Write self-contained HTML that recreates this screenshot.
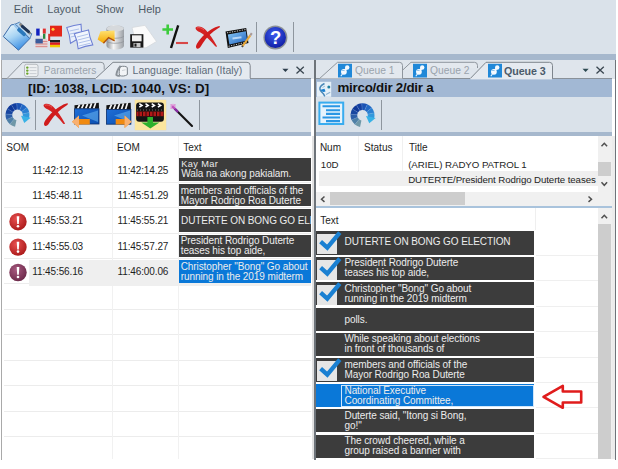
<!DOCTYPE html>
<html><head><meta charset="utf-8">
<style>
*{box-sizing:border-box;margin:0;padding:0}
html,body{width:618px;height:469px;overflow:hidden;background:#fff}
body{position:relative;font-family:"Liberation Sans",sans-serif}
.a{position:absolute}
.t{position:absolute;white-space:nowrap;line-height:1}
svg{position:absolute;overflow:visible}
.mn{font-size:11px;color:#4e5a66;top:3.6px}
.hd{font-size:10px;color:#1e1e1e}
.tm{font-size:10px;color:#1e1e1e;letter-spacing:-0.12px}
.tr{font-size:9.7px;color:#1e1e1e;letter-spacing:-0.04px}
.cell{overflow:hidden}
.ct{font-size:10px;color:#ececec;letter-spacing:-0.08px}
.tab{font-size:10.2px;color:#9aa3ac}
</style></head><body>
<!-- top area -->
<div class="a" style="left:1px;top:0;width:615px;height:54px;background:#dae2ea"></div>
<div class="a" style="left:1px;top:54px;width:615px;height:5.6px;background:#a6b8cd"></div>
<!-- menu -->
<div class="t mn" style="left:13.8px">Edit</div>
<div class="t mn" style="left:47.3px">Layout</div>
<div class="t mn" style="left:96px">Show</div>
<div class="t mn" style="left:138.3px">Help</div>
<!-- toolbar separators -->
<div class="a" style="left:256px;top:22px;width:1.2px;height:30px;background:#8e969e"></div>
<div class="a" style="left:293px;top:22px;width:1.2px;height:30px;background:#8e969e"></div>

<!-- LEFT PANEL -->
<div class="a" style="left:1px;top:59.6px;width:313px;height:19px;background:#dfe5ec"></div>
<div class="a" style="left:1px;top:78.3px;width:310px;height:1px;background:#8a9199"></div>
<div class="a" style="left:1px;top:79.3px;width:310px;height:18px;background:#a2b8d4"></div>
<div class="t" style="left:28px;top:81.6px;font-size:13.35px;font-weight:bold;color:#111;letter-spacing:0.06px">[ID: 1038, LCID: 1040, VS: D]</div>
<div class="a" style="left:1px;top:97.3px;width:310px;height:34.7px;background:#dae2ea"></div>
<div class="a" style="left:1px;top:132px;width:310px;height:4px;background:#a6b8cd"></div>
<div class="a" style="left:1px;top:136px;width:311px;height:323.3px;background:#fff"></div>
<div class="a" style="left:312px;top:136px;width:2px;height:323.3px;background:#e2e2e2"></div>
<div class="a" style="left:1px;top:59.6px;width:1px;height:400px;background:#a9a9a9"></div>
<div class="a" style="left:35px;top:99.5px;width:1.2px;height:30.5px;background:#8e969e"></div>
<div class="a" style="left:198.5px;top:99.5px;width:1.2px;height:30.5px;background:#8e969e"></div>
<div class="a" style="left:134.6px;top:100px;width:31px;height:29.5px;background:#fce69e;box-shadow:0 0 1px #f0d080"></div>

<!-- RIGHT PANEL -->
<div class="a" style="left:314px;top:59.6px;width:1.6px;height:400px;background:#6e747a"></div>
<div class="a" style="left:315.6px;top:59.6px;width:300px;height:19px;background:#dfe5ec"></div>
<div class="a" style="left:316px;top:78.3px;width:296px;height:1px;background:#8a9199"></div>
<div class="a" style="left:316px;top:79.3px;width:296px;height:18px;background:#a2b8d4"></div>
<div class="t" style="left:337.5px;top:81px;font-size:13.35px;font-weight:bold;color:#111;letter-spacing:-0.25px">mirco/dir 2/dir a</div>
<div class="a" style="left:316px;top:97.3px;width:296px;height:34.7px;background:#dae2ea"></div>
<div class="a" style="left:316px;top:132px;width:296px;height:4px;background:#a6b8cd"></div>
<div class="a" style="left:316px;top:136px;width:296px;height:323.3px;background:#fff"></div>
<div class="a" style="left:611px;top:136px;width:4px;height:323.3px;background:#ececec"></div>
<div class="a" style="left:615px;top:59.6px;width:1.2px;height:400px;background:#6e747a"></div>
<div class="a" style="left:380.5px;top:99.5px;width:1.2px;height:30.5px;background:#8e969e"></div>

<div class="a" style="left:4px;top:181.73px;width:307px;height:1px;background:#ececec"></div>
<div class="a" style="left:4px;top:207.16px;width:307px;height:1px;background:#ececec"></div>
<div class="a" style="left:4px;top:232.59px;width:307px;height:1px;background:#ececec"></div>
<div class="a" style="left:4px;top:258.02px;width:307px;height:1px;background:#ececec"></div>
<div class="a" style="left:4px;top:283.45px;width:307px;height:1px;background:#ececec"></div>
<div class="a" style="left:4px;top:308.88px;width:307px;height:1px;background:#ececec"></div>
<div class="a" style="left:4px;top:334.31px;width:307px;height:1px;background:#ececec"></div>
<div class="a" style="left:4px;top:359.74px;width:307px;height:1px;background:#ececec"></div>
<div class="a" style="left:4px;top:385.17px;width:307px;height:1px;background:#ececec"></div>
<div class="a" style="left:4px;top:410.60px;width:307px;height:1px;background:#ececec"></div>
<div class="a" style="left:4px;top:436.03px;width:307px;height:1px;background:#ececec"></div>
<div class="a" style="left:112px;top:136px;width:1px;height:323px;background:#f1f1f1"></div>
<div class="a" style="left:177.5px;top:136px;width:1px;height:323px;background:#f1f1f1"></div>
<div class="t hd" style="left:6.3px;top:142.8px">SOM</div>
<div class="t hd" style="left:117px;top:142.8px">EOM</div>
<div class="t hd" style="left:183.3px;top:142.8px">Text</div>
<div class="t tm" style="left:32.3px;top:165.50px">11:42:12.13</div>
<div class="t tm" style="left:117.5px;top:165.50px">11:42:14.25</div>
<div class="a cell" style="left:179px;top:158.30px;width:132.3px;height:22.7px;background:#3c3c3c">
<div class="t ct" style="left:2.2px;top:1.5px;font-size:9.2px;letter-spacing:0.4px">Kay Mar</div>
<div class="t ct" style="left:2.2px;top:11.2px">Wala na akong pakialam.</div>
</div>
<div class="t tm" style="left:32.3px;top:190.93px">11:45:48.11</div>
<div class="t tm" style="left:117.5px;top:190.93px">11:45:51.29</div>
<div class="a cell" style="left:179px;top:183.73px;width:132.3px;height:22.7px;background:#3c3c3c">
<div class="t ct" style="left:1.7px;top:1.8px">members and officials of the</div>
<div class="t ct" style="left:1.7px;top:11.8px">Mayor Rodrigo Roa Duterte</div>
</div>
<div class="t tm" style="left:32.3px;top:216.36px">11:45:53.21</div>
<div class="t tm" style="left:117.5px;top:216.36px">11:45:55.21</div>
<div class="a cell" style="left:179px;top:209.16px;width:132.3px;height:22.7px;background:#3c3c3c">
<div class="t ct" style="left:2px;top:6.6px">DUTERTE ON BONG GO ELECTION</div>
</div>
<div class="t tm" style="left:32.3px;top:241.79px">11:45:55.03</div>
<div class="t tm" style="left:117.5px;top:241.79px">11:45:57.27</div>
<div class="a cell" style="left:179px;top:234.59px;width:132.3px;height:22.7px;background:#3c3c3c">
<div class="t ct" style="left:1.7px;top:1.8px">President Rodrigo Duterte</div>
<div class="t ct" style="left:1.7px;top:11.8px">teases his top aide,</div>
</div>
<div class="a" style="left:29px;top:260.32px;width:282px;height:25.5px;background:#efefef"></div>
<div class="t tm" style="left:32.3px;top:267.22px">11:45:56.16</div>
<div class="t tm" style="left:117.5px;top:267.22px">11:46:00.06</div>
<div class="a cell" style="left:179px;top:260.02px;width:132.3px;height:22.7px;background:#0a78d8">
<div class="t ct" style="left:1.7px;top:1.8px">Christopher &quot;Bong&quot; Go about</div>
<div class="t ct" style="left:1.7px;top:11.8px">running in the 2019 midterm</div>
</div>
<div class="a" style="left:358px;top:136px;width:1px;height:50px;background:#f0f0f0"></div>
<div class="a" style="left:402px;top:136px;width:1px;height:50px;background:#f0f0f0"></div>
<div class="t hd" style="left:319.9px;top:142.8px">Num</div>
<div class="t hd" style="left:364.1px;top:142.8px">Status</div>
<div class="t hd" style="left:409.1px;top:142.8px">Title</div>
<div class="a" style="left:319px;top:170.8px;width:279px;height:15.5px;background:#efefef"></div>
<div class="t tr" style="left:320.8px;top:160px">10D</div>
<div class="t tr" style="left:408.2px;top:160px">(ARIEL) RADYO PATROL 1</div>
<div class="t tr" style="left:408.2px;top:174.6px;letter-spacing:-0.1px">DUTERTE/President Rodrigo Duterte teases</div>
<div class="a" style="left:316px;top:192.3px;width:282px;height:13.4px;background:#f0f0f0"></div>
<div class="a" style="left:330px;top:192.3px;width:135px;height:12.3px;background:#cdcdcd"></div>
<div class="a" style="left:598px;top:136px;width:14px;height:70px;background:#f0f0f0"></div>
<div class="a" style="left:598.3px;top:162px;width:12.5px;height:13.5px;background:#cdcdcd"></div>
<div class="a" style="left:316px;top:205.7px;width:296px;height:2.6px;background:#a9c3dc"></div>
<div class="a" style="left:534.7px;top:208.3px;width:1px;height:22px;background:#efefef"></div>
<div class="t hd" style="left:320.3px;top:215.8px">Text</div>
<div class="a" style="left:598px;top:208.3px;width:14px;height:251px;background:#f0f0f0"></div>
<div class="a" style="left:598.3px;top:224.2px;width:12.5px;height:235.1px;background:#cdcdcd"></div>
<div class="a" style="left:536px;top:254.90px;width:62px;height:1px;background:#efefef"></div>
<div class="a" style="left:536px;top:280.30px;width:62px;height:1px;background:#efefef"></div>
<div class="a" style="left:536px;top:305.70px;width:62px;height:1px;background:#efefef"></div>
<div class="a" style="left:536px;top:331.10px;width:62px;height:1px;background:#efefef"></div>
<div class="a" style="left:536px;top:356.50px;width:62px;height:1px;background:#efefef"></div>
<div class="a" style="left:536px;top:381.90px;width:62px;height:1px;background:#efefef"></div>
<div class="a" style="left:536px;top:407.30px;width:62px;height:1px;background:#efefef"></div>
<div class="a" style="left:536px;top:432.70px;width:62px;height:1px;background:#efefef"></div>
<div class="a" style="left:536px;top:458.10px;width:62px;height:1px;background:#efefef"></div>
<div class="a cell" style="left:316px;top:231.30px;width:218.3px;height:23.3px;background:#3c3c3c">
<div class="a" style="left:1px;top:3px;width:20px;height:20px;background:#e6e6e6"></div>
<div class="t ct" style="left:28.5px;top:5.9px">DUTERTE ON BONG GO ELECTION</div>
</div>
<svg class="a" style="left:316px;top:231.30px" width="30" height="24"><path d="M4.6 10.6 L11.3 16.6 L23.8 1.6" fill="none" stroke="#1a80d2" stroke-width="4.3" stroke-linejoin="miter" stroke-linecap="butt"/></svg>
<div class="a cell" style="left:316px;top:256.70px;width:218.3px;height:23.3px;background:#3c3c3c">
<div class="a" style="left:1px;top:3px;width:20px;height:20px;background:#e6e6e6"></div>
<div class="t ct" style="left:28.5px;top:1.5px">President Rodrigo Duterte</div>
<div class="t ct" style="left:28.5px;top:11.5px">teases his top aide,</div>
</div>
<svg class="a" style="left:316px;top:256.70px" width="30" height="24"><path d="M4.6 10.6 L11.3 16.6 L23.8 1.6" fill="none" stroke="#1a80d2" stroke-width="4.3" stroke-linejoin="miter" stroke-linecap="butt"/></svg>
<div class="a cell" style="left:316px;top:282.10px;width:218.3px;height:23.3px;background:#3c3c3c">
<div class="a" style="left:1px;top:3px;width:20px;height:20px;background:#e6e6e6"></div>
<div class="t ct" style="left:28.5px;top:1.5px">Christopher &quot;Bong&quot; Go about</div>
<div class="t ct" style="left:28.5px;top:11.5px">running in the 2019 midterm</div>
</div>
<svg class="a" style="left:316px;top:282.10px" width="30" height="24"><path d="M4.6 10.6 L11.3 16.6 L23.8 1.6" fill="none" stroke="#1a80d2" stroke-width="4.3" stroke-linejoin="miter" stroke-linecap="butt"/></svg>
<div class="a cell" style="left:316px;top:307.50px;width:218.3px;height:23.3px;background:#3c3c3c">
<div class="t ct" style="left:28.5px;top:7.9px">polls.</div>
</div>
<div class="a cell" style="left:316px;top:332.90px;width:218.3px;height:23.3px;background:#3c3c3c">
<div class="t ct" style="left:28.5px;top:1.5px">While speaking about elections</div>
<div class="t ct" style="left:28.5px;top:11.5px">in front of thousands of</div>
</div>
<div class="a cell" style="left:316px;top:358.30px;width:218.3px;height:23.3px;background:#3c3c3c">
<div class="a" style="left:1px;top:3px;width:20px;height:20px;background:#e6e6e6"></div>
<div class="t ct" style="left:28.5px;top:1.5px">members and officials of the</div>
<div class="t ct" style="left:28.5px;top:11.5px">Mayor Rodrigo Roa Duterte</div>
</div>
<svg class="a" style="left:316px;top:358.30px" width="30" height="24"><path d="M4.6 10.6 L11.3 16.6 L23.8 1.6" fill="none" stroke="#1a80d2" stroke-width="4.3" stroke-linejoin="miter" stroke-linecap="butt"/></svg>
<div class="a cell" style="left:316px;top:383.70px;width:218.3px;height:23.7px;background:#0a78d8">
<div class="a" style="left:24.6px;top:1.2px;width:193.7px;height:21.7px;border:1px solid #cfe6fb"></div>
<div class="t ct" style="left:28.5px;top:2.7px">National Executive</div>
<div class="t ct" style="left:28.5px;top:12.7px">Coordinating Committee,</div>
</div>
<div class="a cell" style="left:316px;top:409.10px;width:218.3px;height:23.3px;background:#3c3c3c">
<div class="t ct" style="left:28.5px;top:1.5px">Duterte said, &quot;Itong si Bong,</div>
<div class="t ct" style="left:28.5px;top:11.5px">go!&quot;</div>
</div>
<div class="a cell" style="left:316px;top:434.50px;width:218.3px;height:23.3px;background:#3c3c3c">
<div class="t ct" style="left:28.5px;top:1.5px">The crowd cheered, while a</div>
<div class="t ct" style="left:28.5px;top:11.5px">group raised a banner with</div>
</div>
<!-- TABS -->
<svg class="a" style="left:0;top:0" width="618" height="469">
 <!-- left panel tabs -->
 <path d="M7 78.6 L22.8 62.3 L101 62.3 Q104.2 62.3 104.2 65.5 L104.2 69.5" fill="#e3e8ee" stroke="#8f969e" stroke-width="1"/>
 <path d="M95.3 78.8 L113 62.3 L247 62.3 Q250.2 62.3 250.2 65.5 L250.2 78.8" fill="#e5eaf0" stroke="#7e858d" stroke-width="1"/>
 <rect x="95.8" y="78" width="154" height="1.4" fill="#e5eaf0"/>
 <!-- right panel tabs -->
 <path d="M319.5 78.6 L337.5 62.3 L399.5 62.3 Q402.5 62.3 402.5 65.5 L402.5 78.6" fill="#e3e8ee" stroke="#8f969e" stroke-width="1"/>
 <path d="M403 69.8 L411 62.3 L474.5 62.3 Q477.5 62.3 477.5 65.5 L477.5 68" fill="#e3e8ee" stroke="#8f969e" stroke-width="1"/>
 <path d="M470 78.8 L486 62.3 L549.5 62.3 Q552.5 62.3 552.5 65.5 L552.5 78.8" fill="#e5eaf0" stroke="#7e858d" stroke-width="1"/>
 <rect x="470.5" y="78" width="81.5" height="1.4" fill="#e5eaf0"/>
 <!-- dropdown + close -->
 <path d="M282.3 68.8 L288.5 68.8 L285.4 72 Z" fill="#2d3e4c"/>
 <path d="M296.5 66.7 L303.8 73.5 M303.8 66.7 L296.5 73.5" stroke="#3a4650" stroke-width="1.3"/>
 <path d="M582.5 68.8 L588.7 68.8 L585.6 72 Z" fill="#2d4a52"/>
 <path d="M596.5 66.7 L603.8 73.5 M603.8 66.7 L596.5 73.5" stroke="#3a4650" stroke-width="1.3"/>
</svg>
<div class="t tab" style="left:43.7px;top:66.2px">Parameters</div>
<div class="t tab" style="left:132.6px;top:65.4px;color:#5e6c7a;font-size:10.5px">Language: Italian (Italy)</div>
<div class="t tab" style="left:355px;top:65.8px;font-size:10.3px">Queue 1</div>
<div class="t tab" style="left:430px;top:65.8px;font-size:10.3px">Queue 2</div>
<div class="t tab" style="left:504px;top:65.5px;font-size:10.7px;font-weight:bold;color:#4a5a6a;letter-spacing:-0.1px">Queue 3</div>

<svg class="a" style="left:0;top:0" width="618" height="469">
 <!-- parameters icon -->
 <rect x="24.5" y="64.3" width="13.5" height="12.3" rx="2" fill="#eef0f2" stroke="#a8adb2" stroke-width="0.8"/>
 <g fill="#6aa52a"><circle cx="27.3" cy="67.6" r="1.2"/><circle cx="27.3" cy="70.6" r="1.2"/><circle cx="27.3" cy="73.6" r="1.2"/></g>
 <g stroke="#c9ced3" stroke-width="1"><path d="M29.5 67.6H36.5M29.5 70.6H36.5M29.5 73.6H36.5"/></g>
 <!-- language icon -->
 <path d="M120.2 66.6 C123.5 66 126 66.2 127.3 67.5 L127.4 74.6 C125 76.2 122 76.4 119.6 75.6 C118.8 73 119.2 69.5 120.2 66.6 Z" fill="#f2f4f6" stroke="#7a8289" stroke-width="1"/>
 <path d="M120.6 65.8 C118.2 68.5 116.6 71.5 116.3 74.8 C117.3 75.8 118.6 76 119.8 75.6" fill="none" stroke="#8a9198" stroke-width="1.8"/>
 <path d="M122 70.5 L125.5 69.8" stroke="#c0c6cc" stroke-width="0.8"/>
 <!-- queue icons -->
 <g>
  <rect x="338" y="63.8" width="14" height="13.7" fill="#2088d8"/>
  <circle cx="347.2" cy="67.5" r="2.2" fill="#f4faff"/>
  <path d="M344.8 70.4 L346.6 68.4" stroke="#f4faff" stroke-width="2"/>
  <circle cx="343.9" cy="71.8" r="2.9" fill="#f4faff"/>
  <path d="M341.6 70.3 L344.6 70.6" stroke="#60a8e0" stroke-width="0.7"/>
  <path d="M342.4 74 L340.8 76.3" stroke="#e8f4ff" stroke-width="1.1"/>
 </g>
 <g transform="translate(75 0)">
  <rect x="338" y="63.8" width="14" height="13.7" fill="#2088d8"/>
  <circle cx="347.2" cy="67.5" r="2.2" fill="#f4faff"/>
  <path d="M344.8 70.4 L346.6 68.4" stroke="#f4faff" stroke-width="2"/>
  <circle cx="343.9" cy="71.8" r="2.9" fill="#f4faff"/>
  <path d="M341.6 70.3 L344.6 70.6" stroke="#60a8e0" stroke-width="0.7"/>
  <path d="M342.4 74 L340.8 76.3" stroke="#e8f4ff" stroke-width="1.1"/>
 </g>
 <g transform="translate(150 0)">
  <rect x="338" y="63.8" width="14" height="13.7" fill="#2088d8"/>
  <circle cx="347.2" cy="67.5" r="2.2" fill="#f4faff"/>
  <path d="M344.8 70.4 L346.6 68.4" stroke="#f4faff" stroke-width="2"/>
  <circle cx="343.9" cy="71.8" r="2.9" fill="#f4faff"/>
  <path d="M341.6 70.3 L344.6 70.6" stroke="#60a8e0" stroke-width="0.7"/>
  <path d="M342.4 74 L340.8 76.3" stroke="#e8f4ff" stroke-width="1.1"/>
 </g>
 <!-- right title icon -->
 <rect x="317" y="81.8" width="14.2" height="15" fill="#e6f0f8"/>
 <path d="M324.5 83.5 C321.5 85 319.5 87.5 320 89.5 C320.5 91.5 322.5 92.5 323.5 94 L324.8 96.3" fill="none" stroke="#4a88b8" stroke-width="1.5"/>
 <path d="M320.5 89.8 C321.5 91.8 323.5 92.5 325.5 91.5 L324.5 88.8 Z" fill="#1a80d0"/>
 <path d="M322.5 87.5 L325 86" stroke="#9ac0da" stroke-width="1"/>
 <circle cx="328.8" cy="87" r="1.5" fill="#1f7fa0"/>
 <path d="M326 94.5 L330.2 92.3" stroke="#8ab0d0" stroke-width="1.1"/>
</svg>

<!-- TOOLBAR ICONS -->
<svg class="a" style="left:0;top:0" width="618" height="469">
 <defs>
  <linearGradient id="gfold" x1="0.1" y1="0.1" x2="0.6" y2="1"><stop offset="0" stop-color="#e6f4fc"/><stop offset="0.45" stop-color="#a8d4f4"/><stop offset="1" stop-color="#3a8ee4"/></linearGradient>
  <linearGradient id="gdb" x1="0" y1="0" x2="1" y2="0"><stop offset="0" stop-color="#8d9298"/><stop offset="0.4" stop-color="#f4f4f4"/><stop offset="1" stop-color="#9a9fa5"/></linearGradient>
  <linearGradient id="garr" x1="0" y1="0" x2="0" y2="1"><stop offset="0" stop-color="#ffe070"/><stop offset="1" stop-color="#f5a800"/></linearGradient>
  <linearGradient id="gfilm" x1="0" y1="0" x2="1" y2="1"><stop offset="0" stop-color="#8ccaf6"/><stop offset="1" stop-color="#1a5fc0"/></linearGradient>
  <radialGradient id="ghelp" cx="0.45" cy="0.35" r="0.7"><stop offset="0" stop-color="#3c5cf0"/><stop offset="1" stop-color="#0d1aa0"/></radialGradient>
  <linearGradient id="gclap" x1="0" y1="0" x2="1" y2="1"><stop offset="0" stop-color="#1f6fd8"/><stop offset="1" stop-color="#0b4fb0"/></linearGradient>
  <linearGradient id="gref" x1="0" y1="0" x2="1" y2="1"><stop offset="0" stop-color="#0d3a9a"/><stop offset="0.6" stop-color="#1f6ccc"/><stop offset="1" stop-color="#3ab6e8"/></linearGradient>
  <radialGradient id="gerr" cx="0.4" cy="0.35" r="0.7"><stop offset="0" stop-color="#e85050"/><stop offset="1" stop-color="#a81818"/></radialGradient>
  <radialGradient id="gerr2" cx="0.4" cy="0.35" r="0.7"><stop offset="0" stop-color="#a85a80"/><stop offset="1" stop-color="#6a2848"/></radialGradient>
 </defs>
 <!-- 1 folder -->
 <path d="M12 25.5 L19.5 22.2 L31.8 33.8 L29.8 38.6 Z" fill="#b8d8f2" stroke="#4a78b0" stroke-width="0.9"/>
 <path d="M3.3 36.5 L11 25 L15 24.2 L18.5 27 L29.8 38.6 L18.5 50.2 Z" fill="url(#gfold)" stroke="#3a6aa8" stroke-width="1"/>
 <path d="M20.5 24.5 L29.8 33.2" stroke="#8a8680" stroke-width="2.6" stroke-linecap="round"/>
 <path d="M22.2 26.4 L28.6 31.6" stroke="#1e3456" stroke-width="2.8" stroke-linecap="round"/>
 <path d="M18.8 29.6 L24.2 34.4" stroke="#2a78bc" stroke-width="3.6" stroke-linecap="round"/>
 <path d="M14.5 25 L17.2 28.2" stroke="#9cc8ee" stroke-width="2" stroke-linecap="round"/>
 <!-- 2 flags -->
 <rect x="36.2" y="28.6" width="3.6" height="7" fill="#1020c0"/><rect x="39.8" y="28.6" width="3" height="7" fill="#f4f4f4"/><rect x="42.8" y="28.6" width="3" height="5" fill="#e03030"/>
 <rect x="43" y="33.8" width="2.6" height="7.2" fill="#2a8a40"/><rect x="45.6" y="33.8" width="2.6" height="7.2" fill="#f0f0f0"/><rect x="48.2" y="33.8" width="2" height="7.2" fill="#d83030"/>
 <rect x="35.5" y="38.8" width="11.9" height="8.8" fill="#e8d0d0"/><path d="M35.5 41.5H47.4M35.5 44H47.4M35.5 46.6H47.4" stroke="#d88a8a" stroke-width="1"/><rect x="35.5" y="38.8" width="7.3" height="4.6" fill="#3a5c9c"/>
 <rect x="50" y="25.7" width="12" height="10.8" fill="#e42618"/><circle cx="53" cy="29.3" r="1.5" fill="#ffd23a"/>
 <rect x="50" y="40" width="10" height="2.5" fill="#1c1c1c"/><rect x="50" y="42.5" width="10" height="2.4" fill="#dd1c1c"/><rect x="50" y="44.9" width="10" height="2.4" fill="#f2c800"/>
 <!-- 3 documents -->
 <path d="M66.8 27.6 Q74 25.2 81 24.2 Q81.2 30.5 82.4 37 Q76 39.5 70.5 43.2 Q70 35 66.8 27.6 Z" fill="#eaf0fb" stroke="#6e80d4" stroke-width="1.1"/>
 <path d="M69.5 31 L79 29 M70 34 L79.5 32 M70.7 37 L80 35" stroke="#a8bce8" stroke-width="0.9"/>
 <path d="M74.3 33.8 Q81.5 31.5 88.5 30 Q89.5 37.5 92.8 44.9 Q85 46 78.2 48.8 Q77.5 40.5 74.3 33.8 Z" fill="#f2f6fd" stroke="#6e80d4" stroke-width="1.1"/>
 <path d="M77 37 L88 34.2 M77.8 40 L89 37.2 M78.5 43 L90 40.2 M79 46 L90.5 43.2" stroke="#a8bce8" stroke-width="0.9"/>
 <!-- 4 db + arrow -->
 <path d="M106.5 29 C106.5 24 124 24 124 29 L124 45.5 C124 51 106.5 51 106.5 45.5 Z" fill="url(#gdb)"/>
 <ellipse cx="115.2" cy="28.5" rx="8.7" ry="3" fill="#d6d9dc"/>
 <path d="M106.5 36 C108 39 122 39 124 36 M106.5 41 C108 44 122 44 124 41" stroke="#8c9196" stroke-width="0.7" fill="none"/>
 <path d="M97.6 39.5 L100.5 31.2 L114.6 30.6 L114.6 40.8 L108.6 37.6 L103.4 43.2 Z" fill="url(#garr)"/>
 <path d="M103.4 43.2 L108.6 37.6 L114.6 40.8" stroke="#b0500c" stroke-width="1.4" fill="none"/>
 <!-- 5 floppy + paper -->
 <path d="M132 27.5 L145 25.3 L156.5 41.5 L146 47.8 L137 47.8 Z" fill="#fbfbfb" stroke="#d4d8dc" stroke-width="0.8"/>
 <path d="M130.2 34.2 L143.4 34.2 L143.4 47.6 L130.2 47.6 Z" fill="#1a1a1a"/>
 <rect x="132" y="35.3" width="9.6" height="6" fill="#f0f0f0"/>
 <rect x="133.5" y="43" width="7" height="4" fill="#c8c8c8"/><rect x="134.5" y="43.6" width="2" height="3" fill="#1a1a1a"/>
 <!-- 6 +/- -->
 <path d="M162.4 29.5 H173 M167.7 24.5 V34.5" stroke="#3ccc3c" stroke-width="2.6"/>
 <path d="M171 48 L178.2 25.3" stroke="#111" stroke-width="2.4"/>
 <path d="M176 43 H188" stroke="#d84848" stroke-width="2.1"/>
 <!-- 7 red X -->
 <g>
 <path d="M195.5 27.8 C197.5 25.3 202 26.3 205.2 29.5 C209.3 33.6 213.2 39.3 217 46.3 C216.6 47.2 215.6 46.8 215 46.1 C211 41.3 206.5 36.8 202.5 33.8 C199.3 31.6 195.8 31.2 195.5 27.8 Z" fill="#d42222"/>
 <path d="M219.7 26 C220.2 26.9 219.5 27.6 218.5 28.1 C212 32 206.3 37.6 202.3 44 C200.8 46.5 199.7 48.8 197.6 48.7 C195.4 48.2 195.7 45.6 197.4 43 C201.4 37 207.8 31.2 213.8 28.1 C215.9 27 218 26 219.7 26 Z" fill="#d01c1c"/>
 <path d="M197 28 C199 27 202 28 204 30" stroke="#f07070" stroke-width="1" fill="none" opacity="0.7"/>
 </g>
 <!-- 8 film + pencil -->
 <path d="M225.5 31.5 L246.2 28 L248.5 43 L227.8 48 Z" fill="#101010"/>
 <path d="M227.8 34.5 L245.8 31.3 L247.2 40.5 L229.4 44.5 Z" fill="url(#gfilm)"/>
 <path d="M227 32.8 L246 29.5 M228.6 46.3 L247.8 41.8" stroke="#e8e8e8" stroke-width="0.9" stroke-dasharray="1.2 1.3"/>
 <path d="M232.5 38.6 L241.5 37.2" stroke="#d8ecff" stroke-width="2" opacity="0.75"/>
 <path d="M242.3 46.5 L250.3 35.3" stroke="#e8a838" stroke-width="2.1"/>
 <path d="M250.3 35.3 L251.8 33.2" stroke="#a89a98" stroke-width="2.1"/>
 <path d="M242 47 L242.8 45.8" stroke="#444" stroke-width="1.8"/>
 <!-- 9 help -->
 <circle cx="275.4" cy="37.5" r="12" fill="#8a8f96"/>
 <circle cx="275.4" cy="37.5" r="10.6" fill="url(#ghelp)"/>
 <text x="275.6" y="44.3" text-anchor="middle" font-family="Liberation Sans" font-weight="bold" font-size="18.5" fill="#fff">?</text>

 <!-- LEFT PANEL TOOLBAR -->
 <g>
<path d="M15.07 126.65 A12 12 0 0 1 9.83 124.13 L14.11 118.98 A5.3 5.3 0 0 0 16.43 120.09 Z" fill="#6f98a8"/>
<path d="M9.93 124.21 A12 12 0 0 1 6.45 119.57 L12.62 116.96 A5.3 5.3 0 0 0 14.16 119.01 Z" fill="#4f80a6"/>
<path d="M6.50 119.68 A12 12 0 0 1 5.54 113.96 L12.22 114.48 A5.3 5.3 0 0 0 12.64 117.01 Z" fill="#2c5ea8"/>
<path d="M5.53 114.08 A12 12 0 0 1 7.31 108.56 L13.00 112.10 A5.3 5.3 0 0 0 12.21 114.54 Z" fill="#1846a0"/>
<path d="M7.25 108.67 A12 12 0 0 1 11.37 104.58 L14.79 110.34 A5.3 5.3 0 0 0 12.97 112.15 Z" fill="#0f3898"/>
<path d="M11.27 104.65 A12 12 0 0 1 16.81 102.92 L17.19 109.61 A5.3 5.3 0 0 0 14.75 110.37 Z" fill="#123ea0"/>
<path d="M16.68 102.93 A12 12 0 0 1 22.40 103.95 L19.66 110.06 A5.3 5.3 0 0 0 17.14 109.61 Z" fill="#1a52b4"/>
<path d="M22.28 103.90 A12 12 0 0 1 26.89 107.43 L21.65 111.60 A5.3 5.3 0 0 0 19.61 110.04 Z" fill="#2268c4"/>
<path d="M26.81 107.33 A12 12 0 0 1 29.28 112.59 L22.70 113.88 A5.3 5.3 0 0 0 21.61 111.56 Z" fill="#2a80d2"/>
<path d="M29.25 112.47 A12 12 0 0 1 29.02 118.27 L22.59 116.39 A5.3 5.3 0 0 0 22.69 113.83 Z" fill="#3298dc"/>
<path d="M14.14 119.00 L9.88 124.17" stroke="#a8c8ee" stroke-width="0.5" opacity="0.5"/>
<path d="M12.63 116.99 L6.47 119.63" stroke="#a8c8ee" stroke-width="0.5" opacity="0.5"/>
<path d="M12.21 114.51 L5.53 114.02" stroke="#a8c8ee" stroke-width="0.5" opacity="0.5"/>
<path d="M12.99 112.12 L7.28 108.61" stroke="#a8c8ee" stroke-width="0.5" opacity="0.5"/>
<path d="M14.77 110.36 L11.32 104.61" stroke="#a8c8ee" stroke-width="0.5" opacity="0.5"/>
<path d="M17.17 109.61 L16.75 102.92" stroke="#a8c8ee" stroke-width="0.5" opacity="0.5"/>
<path d="M19.64 110.05 L22.34 103.92" stroke="#a8c8ee" stroke-width="0.5" opacity="0.5"/>
<path d="M21.63 111.58 L26.85 107.38" stroke="#a8c8ee" stroke-width="0.5" opacity="0.5"/>
<path d="M22.70 113.85 L29.26 112.53" stroke="#a8c8ee" stroke-width="0.5" opacity="0.5"/>
<path d="M21.02 115.65 L30.61 117.69 L24.25 122.94 Z" fill="#38b2e6"/>

</g>
 <g transform="translate(-152 77.3)">
 <path d="M195.5 27.8 C197.5 25.3 202 26.3 205.2 29.5 C209.3 33.6 213.2 39.3 217 46.3 C216.6 47.2 215.6 46.8 215 46.1 C211 41.3 206.5 36.8 202.5 33.8 C199.3 31.6 195.8 31.2 195.5 27.8 Z" fill="#d42222"/>
 <path d="M219.7 26 C220.2 26.9 219.5 27.6 218.5 28.1 C212 32 206.3 37.6 202.3 44 C200.8 46.5 199.7 48.8 197.6 48.7 C195.4 48.2 195.7 45.6 197.4 43 C201.4 37 207.8 31.2 213.8 28.1 C215.9 27 218 26 219.7 26 Z" fill="#d01c1c"/>
 <path d="M197 28 C199 27 202 28 204 30" stroke="#f07070" stroke-width="1" fill="none" opacity="0.7"/>
 </g>
 <!-- clapper 1 -->
 <path d="M74.5 105.2 L98.8 102.8 L99 108.8 L74.5 108.8 Z" fill="#121212"/>
 <path d="M77.6 108.6 L79.6 104.6 M81.6 108.6 L83.6 104.2 M85.6 108.6 L87.6 103.8 M89.6 108.6 L91.6 103.4 M93.6 108.6 L95.6 103" stroke="#f4f4f4" stroke-width="1.7"/>
 <rect x="74.5" y="108.8" width="24.5" height="15.2" fill="url(#gclap)" stroke="#0d2f6a" stroke-width="0.8"/>
 <path d="M82 115.5 L98 110.5 L98 122 Z" fill="#6ab8f4" opacity="0.55"/>
 <path d="M72 121.8 L79 115.6 L79 119 L89.8 119 L89.8 124.6 L79 124.6 L79 128 Z" fill="#f08a10"/>
 <path d="M72 121.8 L79 115.6 L79 128 Z" fill="#f8b070"/>
 <!-- clapper 2 -->
 <path d="M106.4 105.2 L130.7 102.8 L130.9 109.4 L106.4 109.4 Z" fill="#121212"/>
 <path d="M109.5 109.2 L111.5 104.6 M113.5 109.2 L115.5 104.2 M117.5 109.2 L119.5 103.8 M121.5 109.2 L123.5 103.4 M125.5 109.2 L127.5 103" stroke="#f4f4f4" stroke-width="1.7"/>
 <rect x="106.4" y="109.4" width="24.5" height="14.8" fill="url(#gclap)" stroke="#0d2f6a" stroke-width="0.8"/>
 <path d="M114 115.5 L130 110.5 L130 122 Z" fill="#6ab8f4" opacity="0.55"/>
 <path d="M131.6 121.8 L124.6 115.6 L124.6 119 L115.7 119 L115.7 124.6 L124.6 124.6 L124.6 128 Z" fill="#f08a10"/>
 <path d="M131.6 121.8 L124.6 115.6 L124.6 128 Z" fill="#f8b070"/>
 <!-- clapper 3 -->
 <rect x="136.1" y="102.4" width="27.8" height="19.4" rx="3" fill="#141414"/>
 <path d="M139.3 103.6 L142 105.4 L139.3 107.2 M145.5 103.6 L148.2 105.4 L145.5 107.2 M151.7 103.6 L154.4 105.4 L151.7 107.2 M157.9 103.6 L160.6 105.4 L157.9 107.2" stroke="#fff" stroke-width="1.6" fill="none"/>
 <path d="M137 110 H163" stroke="#9a9a9a" stroke-width="0.7" stroke-dasharray="1 2"/>
 <rect x="136.5" y="111.6" width="27" height="4.6" fill="#b01818"/>
 <path d="M139 111.6 V116.2 M142.5 111.6 V116.2 M146 111.6 V116.2 M149.5 111.6 V116.2 M153 111.6 V116.2 M156.5 111.6 V116.2 M160 111.6 V116.2" stroke="#2a0808" stroke-width="0.9"/>
 <path d="M141.3 122.6 L159.4 122.6 L150.3 128.6 Z M147.4 117 H153 V123 H147.4 Z" fill="#2db02d"/>
 <!-- wand -->
 <path d="M175 109 L192 126" stroke="#141414" stroke-width="2.1" stroke-linecap="round"/>
 <path d="M172.8 106.8 L177.5 111.5" stroke="#8a2aa8" stroke-width="2.2" stroke-linecap="round"/>
 <circle cx="173" cy="106.5" r="2.8" fill="#e070d0" opacity="0.45"/>
 <path d="M170.5 104 L175.5 109 M175.5 104 L170.5 109" stroke="#e060c8" stroke-width="0.8" opacity="0.7"/>

 <!-- RIGHT PANEL TOOLBAR -->
 <rect x="319.4" y="102.6" width="23.8" height="21.4" fill="#e6f3fc" stroke="#38acef" stroke-width="2"/>
 <path d="M322.5 106.2H340M326 110.2H340M326 113.9H340M322.5 117.5H340M326 121.1H340" stroke="#2a96e4" stroke-width="2.1"/>
 <g transform="translate(345 0.3)">
<path d="M15.07 126.65 A12 12 0 0 1 9.83 124.13 L14.11 118.98 A5.3 5.3 0 0 0 16.43 120.09 Z" fill="#6f98a8"/>
<path d="M9.93 124.21 A12 12 0 0 1 6.45 119.57 L12.62 116.96 A5.3 5.3 0 0 0 14.16 119.01 Z" fill="#4f80a6"/>
<path d="M6.50 119.68 A12 12 0 0 1 5.54 113.96 L12.22 114.48 A5.3 5.3 0 0 0 12.64 117.01 Z" fill="#2c5ea8"/>
<path d="M5.53 114.08 A12 12 0 0 1 7.31 108.56 L13.00 112.10 A5.3 5.3 0 0 0 12.21 114.54 Z" fill="#1846a0"/>
<path d="M7.25 108.67 A12 12 0 0 1 11.37 104.58 L14.79 110.34 A5.3 5.3 0 0 0 12.97 112.15 Z" fill="#0f3898"/>
<path d="M11.27 104.65 A12 12 0 0 1 16.81 102.92 L17.19 109.61 A5.3 5.3 0 0 0 14.75 110.37 Z" fill="#123ea0"/>
<path d="M16.68 102.93 A12 12 0 0 1 22.40 103.95 L19.66 110.06 A5.3 5.3 0 0 0 17.14 109.61 Z" fill="#1a52b4"/>
<path d="M22.28 103.90 A12 12 0 0 1 26.89 107.43 L21.65 111.60 A5.3 5.3 0 0 0 19.61 110.04 Z" fill="#2268c4"/>
<path d="M26.81 107.33 A12 12 0 0 1 29.28 112.59 L22.70 113.88 A5.3 5.3 0 0 0 21.61 111.56 Z" fill="#2a80d2"/>
<path d="M29.25 112.47 A12 12 0 0 1 29.02 118.27 L22.59 116.39 A5.3 5.3 0 0 0 22.69 113.83 Z" fill="#3298dc"/>
<path d="M14.14 119.00 L9.88 124.17" stroke="#a8c8ee" stroke-width="0.5" opacity="0.5"/>
<path d="M12.63 116.99 L6.47 119.63" stroke="#a8c8ee" stroke-width="0.5" opacity="0.5"/>
<path d="M12.21 114.51 L5.53 114.02" stroke="#a8c8ee" stroke-width="0.5" opacity="0.5"/>
<path d="M12.99 112.12 L7.28 108.61" stroke="#a8c8ee" stroke-width="0.5" opacity="0.5"/>
<path d="M14.77 110.36 L11.32 104.61" stroke="#a8c8ee" stroke-width="0.5" opacity="0.5"/>
<path d="M17.17 109.61 L16.75 102.92" stroke="#a8c8ee" stroke-width="0.5" opacity="0.5"/>
<path d="M19.64 110.05 L22.34 103.92" stroke="#a8c8ee" stroke-width="0.5" opacity="0.5"/>
<path d="M21.63 111.58 L26.85 107.38" stroke="#a8c8ee" stroke-width="0.5" opacity="0.5"/>
<path d="M22.70 113.85 L29.26 112.53" stroke="#a8c8ee" stroke-width="0.5" opacity="0.5"/>
<path d="M21.02 115.65 L30.61 117.69 L24.25 122.94 Z" fill="#38b2e6"/>

</g>

 <!-- scroll arrows -->
 <path d="M601.5 146.3 L604.3 143.3 L607.1 146.3" fill="none" stroke="#505050" stroke-width="1.5"/>
 <path d="M601.5 182.3 L604.3 185.3 L607.1 182.3" fill="none" stroke="#505050" stroke-width="1.5"/>
 <path d="M324.5 196.5 L321.5 199.2 L324.5 201.9" fill="none" stroke="#505050" stroke-width="1.5"/>
 <path d="M588.5 196.5 L591.5 199.2 L588.5 201.9" fill="none" stroke="#505050" stroke-width="1.5"/>
 <path d="M601.5 218.3 L604.3 215.3 L607.1 218.3" fill="none" stroke="#505050" stroke-width="1.5"/>

 <!-- error icons -->
 <circle cx="18" cy="221.7" r="8.7" fill="url(#gerr)"/>
 <circle cx="18" cy="247.1" r="8.7" fill="url(#gerr)"/>
 <circle cx="18" cy="272.5" r="8.7" fill="url(#gerr2)"/>
 <g fill="#fff">
  <path d="M16.7 216.3 H19.3 L18.8 224 H17.2 Z"/><circle cx="18" cy="226.2" r="1.3"/>
  <path d="M16.7 241.7 H19.3 L18.8 249.4 H17.2 Z"/><circle cx="18" cy="251.6" r="1.3"/>
  <path d="M16.7 267.1 H19.3 L18.8 274.8 H17.2 Z"/><circle cx="18" cy="277" r="1.3"/>
 </g>

 <!-- red arrow -->
 <path d="M543.5 396.8 L562.8 385.9 L562.8 391.5 L581.2 391.5 L581.2 402.5 L562.8 402.5 L562.8 407.8 Z" fill="#fff" stroke="#e01c1c" stroke-width="2.6" stroke-linejoin="round"/>
</svg>

</body></html>
